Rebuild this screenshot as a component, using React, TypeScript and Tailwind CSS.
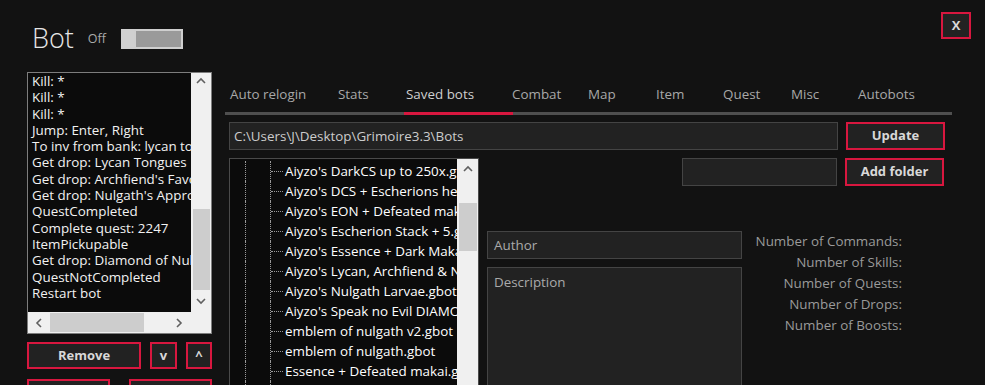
import React from "react";

const font = { fontFamily: '"Open Sans", "Noto Sans", sans-serif' };

const commands = [
  "Kill: *",
  "Kill: *",
  "Kill: *",
  "Jump: Enter, Right",
  "To inv from bank: lycan tongues",
  "Get drop: Lycan Tongues",
  "Get drop: Archfiend's Favor",
  "Get drop: Nulgath's Approval",
  "QuestCompleted",
  "Complete quest: 2247",
  "ItemPickupable",
  "Get drop: Diamond of Nulgath",
  "QuestNotCompleted",
  "Restart bot",
];

const bots = [
  "Aiyzo's DarkCS up to 250x.gbot",
  "Aiyzo's DCS + Escherions helm.gbot",
  "Aiyzo's EON + Defeated makai.gbot",
  "Aiyzo's Escherion Stack + 5.gbot",
  "Aiyzo's Essence + Dark Makai.gbot",
  "Aiyzo's Lycan, Archfiend & Nulgath.gbot",
  "Aiyzo's Nulgath Larvae.gbot",
  "Aiyzo's Speak no Evil DIAMONDS.gbot",
  "emblem of nulgath v2.gbot",
  "emblem of nulgath.gbot",
  "Essence + Defeated makai.gbot",
  "Fragment.gbot",
];

const tabs = [
  { label: "Auto relogin", w: "w-[111px] pl-[3px]" },
  { label: "Stats", w: "w-[68px]" },
  { label: "Saved bots", w: "w-[106px]", active: true },
  { label: "Combat", w: "w-[76px]" },
  { label: "Map", w: "w-[68px]" },
  { label: "Item", w: "w-[67px]" },
  { label: "Quest", w: "w-[68px]" },
  { label: "Misc", w: "w-[67px]" },
  { label: "Autobots", w: "w-[90px]" },
];

const stats = ["Number of Commands:", "Number of Skills:", "Number of Quests:", "Number of Drops:", "Number of Boosts:"];

function Chevron({ dir }: { dir: "up" | "down" | "left" | "right" }) {
  const d = {
    up: "M1 6 L5 2 L9 6",
    down: "M1 2 L5 6 L9 2",
    left: "M6 1 L2 5 L6 9",
    right: "M2 1 L6 5 L2 9",
  }[dir];
  const vert = dir === "up" || dir === "down";
  return (
    <svg width={vert ? 10 : 8} height={vert ? 8 : 10} viewBox={vert ? "0 0 10 8" : "0 0 8 10"}>
      <path d={d} fill="none" stroke="#606060" strokeWidth="1.6" />
    </svg>
  );
}

function RedButton({ children, className }: { children?: React.ReactNode; className: string }) {
  return (
    <div
      className={`flex shrink-0 items-center justify-center border-2 border-[#d8173f] bg-[#222222] text-[13px] font-bold text-[#d8d8d8] ${className}`}
    >
      {children}
    </div>
  );
}

export default function App() {
  return (
    <div className="flex h-[385px] w-[985px] flex-col overflow-hidden bg-[#121212]" style={font}>
      {/* header */}
      <div className="flex h-[72px] shrink-0 items-start justify-between pl-[32px] pr-[14px]">
        <div className="mt-[20px] flex items-center">
          <span className="text-[27px] font-light leading-[36px] text-[#e6e6e6]">Bot</span>
          <span className="ml-[14px] mt-[3px] text-[12.5px] text-[#aaaaaa]">Off</span>
          <div className="ml-[15px] mt-[2px] flex h-[20px] w-[62px]">
            <div className="h-full w-[13px] bg-[#d0d0d0]" />
            <div className="h-full flex-1 border-2 border-[#cfcfcf] bg-[#9a9a9a]" />
          </div>
        </div>
        <RedButton className="mt-[12px] h-[27px] w-[30px]">X</RedButton>
      </div>

      <div className="flex min-h-0 flex-1 overflow-hidden">
        {/* left column */}
        <div className="ml-[27px] flex w-[185px] shrink-0 flex-col">
          <div className="grid h-[262px] shrink-0 grid-cols-[1fr_20px] grid-rows-[1fr_21px] border border-[#7d7d7d] bg-[#0b0b0b]">
            <div className="overflow-hidden whitespace-nowrap pl-[4px] text-[13.4px] leading-[16.3px] text-[#f2f2f2]">
              {commands.map((c, i) => (
                <div key={i}>{c}</div>
              ))}
            </div>
            <div className="flex flex-col items-center bg-[#f0f0f0]">
              <div className="flex h-[16px] items-center">
                <Chevron dir="up" />
              </div>
              <div className="mt-[120px] h-[81px] w-[17px] bg-[#cdcdcd]" />
              <div className="flex flex-1 items-center">
                <Chevron dir="down" />
              </div>
            </div>
            <div className="col-span-2 flex items-center bg-[#f0f0f0]">
              <div className="flex w-[22px] justify-center">
                <Chevron dir="left" />
              </div>
              <div className="h-[19px] w-[94px] bg-[#cdcdcd]" />
              <div className="flex flex-1 justify-end pr-[28px]">
                <Chevron dir="right" />
              </div>
            </div>
          </div>
          <div className="mt-[8px] flex shrink-0 gap-[9px]">
            <RedButton className="h-[27px] w-[114px]">Remove</RedButton>
            <RedButton className="h-[27px] w-[27px]">v</RedButton>
            <RedButton className="h-[27px] w-[26px]">^</RedButton>
          </div>
          <div className="mt-[10px] flex shrink-0 justify-between">
            <RedButton className="h-[27px] w-[83px]" />
            <RedButton className="h-[27px] w-[83px]" />
          </div>
        </div>

        {/* right panel */}
        <div className="ml-[13px] flex w-[727px] shrink-0 flex-col">
          <div className="flex h-[40px] shrink-0 items-end">
            {tabs.map((t) => (
              <div key={t.label} className={`${t.w} flex h-full shrink-0 flex-col justify-end`}>
                <span
                  className={`pb-[9px] pl-[2px] text-[13.4px] leading-[18px] ${t.active ? "text-[#cfcfcf]" : "text-[#a8a8a8]"}`}
                >
                  {t.label}
                </span>
              </div>
            ))}
          </div>
          <div className="relative h-[3px] w-[727px] shrink-0 bg-[#4f4f4f]">
            <div className="absolute left-[179px] top-0 h-[3px] w-[109px] bg-[#d8173f]" />
          </div>

          <div className="ml-[4px] mt-[7px] flex shrink-0 gap-[8px]">
            <div className="flex h-[28px] w-[609px] items-center border border-[#444444] bg-[#222222] pl-[4px] text-[13.4px] text-[#cccccc]">
              C:\Users\J\Desktop\Grimoire3.3\Bots
            </div>
            <RedButton className="h-[28px] w-[99px]">Update</RedButton>
          </div>

          <div className="ml-[4px] mt-[8px] flex min-h-0 flex-1">
            {/* tree */}
            <div className="flex h-[240px] w-[250px] shrink-0 border border-[#4a4a4a] bg-[#0b0b0b]">
              <div className="min-w-0 flex-1 overflow-hidden whitespace-nowrap pt-[2px] text-[13.4px] leading-[20px] text-white">
                {bots.map((b, i) => (
                  <div key={i} className="flex h-[20px] items-stretch">
                    <div className="w-[15px] shrink-0" />
                    <div className="w-[25px] shrink-0 border-l border-dotted border-[#9a9a9a]" />
                    <div className="flex w-[15px] shrink-0 items-center border-l border-dotted border-[#9a9a9a]">
                      <div className="w-[12px] border-t border-dotted border-[#9a9a9a]" />
                    </div>
                    <span className="shrink-0">{b}</span>
                  </div>
                ))}
              </div>
              <div className="flex w-[21px] shrink-0 flex-col items-center bg-[#f0f0f0]">
                <div className="flex h-[20px] items-center">
                  <Chevron dir="up" />
                </div>
                <div className="mt-[24px] h-[48px] w-[18px] bg-[#cdcdcd]" />
              </div>
            </div>

            {/* details */}
            <div className="ml-[8px] flex flex-1 flex-col">
              <div className="flex justify-end gap-[8px] pr-[8px]">
                <div className="h-[28px] w-[155px] border border-[#444444] bg-[#222222]" />
                <RedButton className="h-[28px] w-[99px]">Add folder</RedButton>
              </div>
              <div className="mt-[45px] flex">
                <div className="flex w-[255px] shrink-0 flex-col gap-[8px]">
                  <div className="flex h-[28px] items-center border border-[#444444] bg-[#222222] pl-[6px] text-[13.4px] text-[#aaaaaa]">
                    Author
                  </div>
                  <div className="h-[130px] border border-[#444444] bg-[#222222] pl-[6px] pt-[4px] text-[13.4px] text-[#aaaaaa]">
                    Description
                  </div>
                </div>
                <div className="flex w-[160px] shrink-0 flex-col items-end text-[13.4px] leading-[21px] text-[#9a9a9a]">
                  {stats.map((s) => (
                    <div key={s}>{s}</div>
                  ))}
                </div>
              </div>
            </div>
          </div>
        </div>
      </div>
    </div>
  );
}
